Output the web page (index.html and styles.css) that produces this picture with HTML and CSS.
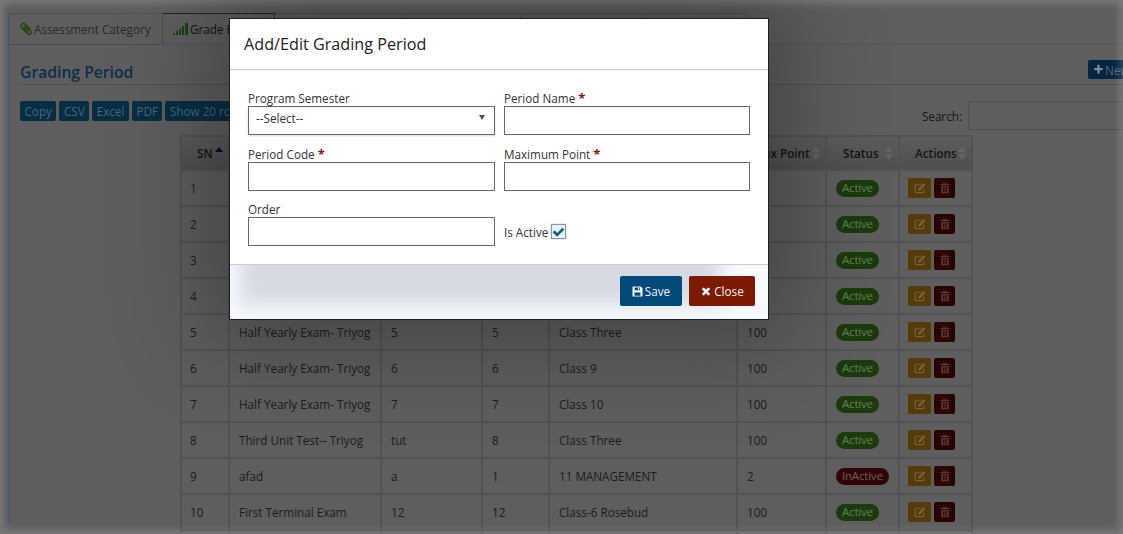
FILE: index.html
```html
<!DOCTYPE html>
<html lang="en">
<head>
<meta charset="utf-8">
<title>Grading Period</title>
<link rel="stylesheet" href="styles.css">
</head>
<body>
<svg class="defs" width="0" height="0" aria-hidden="true">
  <symbol id="i-check" viewBox="0 0 1792 1792"><path d="M1671 566q0 40-28 68l-724 724-136 136q-28 28-68 28t-68-28l-136-136-362-362q-28-28-28-68t28-68l136-136q28-28 68-28t68 28l294 295 656-657q28-28 68-28t68 28l136 136q28 28 28 68z"/></symbol>
  <symbol id="i-times" viewBox="0 0 1792 1792"><path d="M1490 1322q0 40-28 68l-136 136q-28 28-68 28t-68-28l-294-294-294 294q-28 28-68 28t-68-28l-136-136q-28-28-28-68t28-68l294-294-294-294q-28-28-28-68t28-68l136-136q28-28 68-28t68 28l294 294 294-294q28-28 68-28t68 28l136 136q28 28 28 68t-28 68l-294 294 294 294q28 28 28 68z"/></symbol>
  <symbol id="i-plus" viewBox="0 0 1792 1792"><path d="M1600 736v192q0 40-28 68t-68 28h-416v416q0 40-28 68t-68 28h-192q-40 0-68-28t-28-68v-416h-416q-40 0-68-28t-28-68v-192q0-40 28-68t68-28h416v-416q0-40 28-68t68-28h192q40 0 68 28t28 68v416h416q40 0 68 28t28 68z"/></symbol>
  <symbol id="i-clip" viewBox="0 0 1792 1792"><path d="M1596 1385q0 117-79 196t-196 79q-135 0-235-100l-777-776q-113-115-113-271 0-159 110-270t269-111q158 0 273 113l605 606q10 10 10 22 0 16-30.500 46.500t-46.500 30.500q-13 0-23-10l-606-607q-79-77-181-77-106 0-179 75t-73 181q0 105 76 181l776 777q63 63 145 63 64 0 106-42t42-106q0-82-63-145l-581-581q-26-24-60-24-29 0-48 19t-19 48q0 32 25 59l410 410q10 10 10 22 0 16-31 47t-47 31q-12 0-22-10l-410-410q-63-61-63-149 0-82 57-139t139-57q88 0 149 63l581 581q100 98 100 235z"/></symbol>
  <symbol id="i-save" viewBox="0 0 12 12"><path fill-rule="evenodd" d="M1 .5h8.500L11.500 2.500V10.500a1 1 0 0 1-1 1h-9a1 1 0 0 1-1-1v-9a1 1 0 0 1 .5-1zM3 1.500v3.200h5.500V1.500zM6.500 2h1.200v2.200H6.500zM2.800 7v3.500h6.400V7z"/></symbol>
  <symbol id="i-edit" viewBox="0 0 14 14"><path d="M2.500 2h7L8.200 3.300H2.800a.6.6 0 0 0-.6.6v7.300c0 .3.300.6.600.6h7.400c.3 0 .6-.3.600-.6V8.200L12.100 7v4.300a2 2 0 0 1-2 1.900H2.700a2 2 0 0 1-1.900-1.900V3.800A2 2 0 0 1 2.500 2z"/><path d="M11.300 1.500l2 2-6 6-2.800.8.800-2.800z"/></symbol>
  <symbol id="i-trash" viewBox="0 0 12 14"><path fill-rule="evenodd" d="M4.200.8h3.600l.8 1.500H11.500v1.200H.5V2.300h2.900zM5 1.700l-.3.600h2.600L7 1.700zM1.500 4.300h9v8a1 1 0 0 1-1 1h-7a1 1 0 0 1-1-1zM3.500 5.500v6.500h1V5.500zM5.500 5.500v6.500h1V5.500zM7.500 5.500v6.500h1V5.500z"/></symbol>
</svg>

<div class="page">
  <ul class="tabs">
    <li class="tab tab-a">
      <svg class="clip"><use href="#i-clip"/></svg>
      <span>Assessment Category</span>
    </li>
    <li class="tab tab-b is-active">
      <svg class="bars" viewBox="0 0 15 12"><path d="M0 10h2v2H0zM3 8h2v4H3zM6 6h2v6H6zM9 3h2v9H9zM12 0h3v12h-3z"/></svg>
      <span>Grade Period</span>
    </li>
    <li class="tab tab-c"></li>
    <li class="tab tab-d"></li>
    <li class="tab tab-e"></li>
    <li class="tab tab-f"></li>
  </ul>

  <section class="pane">
    <header class="heading">
      <h2>Grading Period</h2>
      <button class="new-btn" type="button"><svg class="ico-plus"><use href="#i-plus"/></svg>New</button>
    </header>

    <div class="toolbar">
      <div class="dt-buttons">
        <span class="dt-btn">Copy</span>
        <span class="dt-btn">CSV</span>
        <span class="dt-btn">Excel</span>
        <span class="dt-btn">PDF</span>
        <span class="dt-btn">Show 20 rows</span>
      </div>
      <label class="search">Search:<span class="search-box"></span></label>
    </div>

    <table class="grid">
      <colgroup>
        <col class="c1"><col class="c2"><col class="c3"><col class="c4"><col class="c5"><col class="c6"><col class="c7"><col class="c8">
      </colgroup>
      <thead>
        <tr>
          <th class="th-sn">SN<i class="sort-up"></i></th>
          <th></th>
          <th></th>
          <th></th>
          <th></th>
          <th class="th-max">Max Point<i class="sort"></i></th>
          <th class="th-st">Status<i class="sort"></i></th>
          <th class="th-ac">Actions<i class="sort"></i></th>
        </tr>
      </thead>
      <tbody>
        <tr><td>1</td><td></td><td></td><td></td><td></td><td></td><td><span class="badge on">Active</span></td><td><span class="act"><span class="a-edit"><svg><use href="#i-edit"/></svg></span><span class="a-del"><svg><use href="#i-trash"/></svg></span></span></td></tr>
        <tr><td>2</td><td></td><td></td><td></td><td></td><td></td><td><span class="badge on">Active</span></td><td><span class="act"><span class="a-edit"><svg><use href="#i-edit"/></svg></span><span class="a-del"><svg><use href="#i-trash"/></svg></span></span></td></tr>
        <tr><td>3</td><td></td><td></td><td></td><td></td><td></td><td><span class="badge on">Active</span></td><td><span class="act"><span class="a-edit"><svg><use href="#i-edit"/></svg></span><span class="a-del"><svg><use href="#i-trash"/></svg></span></span></td></tr>
        <tr><td>4</td><td></td><td></td><td></td><td></td><td></td><td><span class="badge on">Active</span></td><td><span class="act"><span class="a-edit"><svg><use href="#i-edit"/></svg></span><span class="a-del"><svg><use href="#i-trash"/></svg></span></span></td></tr>
        <tr><td>5</td><td>Half Yearly Exam- Triyog</td><td>5</td><td>5</td><td>Class Three</td><td>100</td><td><span class="badge on">Active</span></td><td><span class="act"><span class="a-edit"><svg><use href="#i-edit"/></svg></span><span class="a-del"><svg><use href="#i-trash"/></svg></span></span></td></tr>
        <tr><td>6</td><td>Half Yearly Exam- Triyog</td><td>6</td><td>6</td><td>Class 9</td><td>100</td><td><span class="badge on">Active</span></td><td><span class="act"><span class="a-edit"><svg><use href="#i-edit"/></svg></span><span class="a-del"><svg><use href="#i-trash"/></svg></span></span></td></tr>
        <tr><td>7</td><td>Half Yearly Exam- Triyog</td><td>7</td><td>7</td><td>Class 10</td><td>100</td><td><span class="badge on">Active</span></td><td><span class="act"><span class="a-edit"><svg><use href="#i-edit"/></svg></span><span class="a-del"><svg><use href="#i-trash"/></svg></span></span></td></tr>
        <tr><td>8</td><td>Third Unit Test-- Triyog</td><td>tut</td><td>8</td><td>Class Three</td><td>100</td><td><span class="badge on">Active</span></td><td><span class="act"><span class="a-edit"><svg><use href="#i-edit"/></svg></span><span class="a-del"><svg><use href="#i-trash"/></svg></span></span></td></tr>
        <tr><td>9</td><td>afad</td><td>a</td><td>1</td><td>11 MANAGEMENT</td><td>2</td><td><span class="badge off">InActive</span></td><td><span class="act"><span class="a-edit"><svg><use href="#i-edit"/></svg></span><span class="a-del"><svg><use href="#i-trash"/></svg></span></span></td></tr>
        <tr><td>10</td><td>First Terminal Exam</td><td>12</td><td>12</td><td>Class-6 Rosebud</td><td>100</td><td><span class="badge on">Active</span></td><td><span class="act"><span class="a-edit"><svg><use href="#i-edit"/></svg></span><span class="a-del"><svg><use href="#i-trash"/></svg></span></span></td></tr>
        <tr><td></td><td></td><td></td><td></td><td></td><td></td><td></td><td></td></tr>
      </tbody>
    </table>
  </section>
</div>

<div class="edge"></div>

<div class="modal" role="dialog">
  <div class="modal-head"><h4>Add/Edit Grading Period</h4></div>
  <form class="modal-body">
    <div class="field">
      <label>Program Semester</label>
      <div class="select">--Select--<i class="caret"></i></div>
    </div>
    <div class="field">
      <label>Period Name <b class="req">*</b></label>
      <div class="input"></div>
    </div>
    <div class="field">
      <label>Period Code <b class="req">*</b></label>
      <div class="input"></div>
    </div>
    <div class="field">
      <label>Maximum Point <b class="req">*</b></label>
      <div class="input"></div>
    </div>
    <div class="field">
      <label>Order</label>
      <div class="input"></div>
    </div>
    <div class="field check-field">
      <span>Is Active</span>
      <span class="check"><svg><use href="#i-check"/></svg></span>
    </div>
  </form>
  <div class="modal-foot">
    <button class="btn save" type="button"><svg><use href="#i-save"/></svg>Save</button>
    <button class="btn close" type="button"><svg><use href="#i-times"/></svg>Close</button>
  </div>
</div>
</body>
</html>
```

FILE: styles.css
```css
* { box-sizing: border-box; }
html, body { margin: 0; height: 534px; overflow: hidden; }
body {
  background: #5e5e5e;
  font-family: "Open Sans", "Noto Sans", sans-serif;
  font-size: 11.7px;
  color: #1c1c1c;
  position: relative;
}
.defs { position: absolute; }

.page { padding: 13px 0 0 8px; width: 1123px; height: 534px; overflow: hidden; }

/* tabs */
.tabs { list-style: none; margin: 0; padding: 0; display: flex; height: 32px; width: 1200px; border-bottom: 1px solid #435870; }
.tab { height: 32px; border: 1px solid #40505f; border-left-width: 0; display: flex; align-items: center; gap: 1px; color: #2a2a2a; white-space: nowrap; }
.tab-a { width: 155px; border-left-width: 1px; padding-left: 10px; border-top-color: #4a5560; border-bottom-color: #40505f; }
.tab-b { width: 112px; padding-left: 10px; color: #111; border-top-color: #1c242c; border-bottom-color: transparent; border-right-color: #26313b; }
.tab-c { width: 128px; }
.tab-d { width: 118px; }
.tab-e { width: 122px; }
.tab-f { width: 105px; }
.clip { width: 14px; height: 14px; flex: none; fill: #1a4410; stroke: #1a4410; stroke-width: 70; }
.bars { width: 15px; height: 12px; fill: #1a4410; flex: none; margin-right: 1px; }

/* pane */
.pane { width: 1140px; height: 480px; border-left: 1px solid #435870; padding: 0 0 0 11px; }
.heading { display: flex; justify-content: space-between; align-items: flex-end; height: 40px; border-bottom: 1px solid #4f4f4f; }
.heading h2 { margin: 0; font-size: 15.7px; line-height: 24px; font-weight: 600; color: #0c2e4c; }
.new-btn { width: 60px; height: 19px; align-self: flex-start; margin: 15px 0 0; border: 0; border-radius: 2px; padding: 0 0 0 5px; background: #052540; color: #506a7c; font: 11.7px "Open Sans", sans-serif; display: flex; align-items: center; text-align: left; }
.ico-plus { width: 11px; height: 11px; fill: #7a8d9c; margin-right: 1px; }

.toolbar { display: flex; justify-content: space-between; align-items: flex-start; margin-top: 16px; height: 34px; }
.dt-buttons { display: flex; gap: 3px; }
.dt-btn { height: 20px; line-height: 20px; padding: 0 4.500px; background: #072e44; color: #47697b; border-radius: 2px; white-space: nowrap; }
.search { display: flex; align-items: center; gap: 6px; color: #161616; }
.search-box { width: 180px; height: 29px; border: 1px solid #505050; display: block; }

/* table */
.grid { margin-left: 160px; width: 793px; border-collapse: separate; border-spacing: 0; table-layout: fixed; }
.c1 { width: 50px; } .c2 { width: 152px; } .c3 { width: 101px; } .c4 { width: 67px; }
.c5 { width: 188px; } .c6 { width: 89px; } .c7 { width: 73px; } .c8 { width: 73px; }
.grid th, .grid td { border-right: 2px solid #525252; border-bottom: 2px solid #525252; white-space: nowrap; overflow: hidden; }
.grid th:first-child, .grid td:first-child { border-left: 2px solid #525252; }
.grid th { height: 36px; font-weight: 600; background: linear-gradient(#5c5c5c, #4f4f4f); border-top: 2px solid #525252; text-align: left; padding: 0 0 0 15px; color: #141414; position: relative; }
.grid td { height: 36px; padding: 0 0 0 9px; color: #1c1c1c; }
.grid td:first-child { padding-left: 8px; }
.th-max { text-align: right !important; padding-right: 17px !important; }
.th-st { padding-left: 16px !important; }
.sort, .sort-up { position: absolute; right: 5px; top: 9px; display: block; width: 8px; height: 14px; }
.sort::before, .sort::after, .sort-up::before { content: ""; position: absolute; left: 0; border-left: 4px solid transparent; border-right: 4px solid transparent; }
.sort::before { top: 0; border-bottom: 6px solid #636363; }
.sort::after { bottom: 0; border-top: 6px solid #636363; }
.sort-up::before { top: 1px; border-bottom: 5px solid #0a0a34; }

.badge { display: inline-block; height: 17px; line-height: 16px; padding: 0 6px; border-radius: 9px; font-size: 11.5px; letter-spacing: -.2px; vertical-align: middle; }
.on { background: #1c3a0e; color: #64805a; }
.off { background: #2e0606; color: #7a5a5a; }
.act { display: flex; gap: 3px; }
.a-edit, .a-del { height: 20px; display: flex; align-items: center; justify-content: center; border-radius: 2px; }
.a-edit { width: 23px; background: #553a0a; fill: #7a5f38; }
.a-del { width: 21px; background: #2a0202; fill: #5e3a3a; }
.a-edit svg { width: 12px; height: 12px; }
.a-del svg { width: 10px; height: 12px; }
.grid td:nth-child(8) { padding-left: 8px; }

/* edge haze */
.edge { position: absolute; inset: 0; box-shadow: inset 0 0 7px 4px rgba(255,255,255,.17); pointer-events: none; }

/* modal */
.modal {
  position: absolute; left: 229px; top: 18px; width: 540px; height: 302px;
  background: #fff; border: 1px solid #1e1e1e; color: #333;
  box-shadow: 0 0 90px 20px rgba(0,0,0,.3);
  display: flex; flex-direction: column;
}
.modal-head { height: 51px; flex: none; border-bottom: 1px solid #c6c6c6; padding: 0 14px; display: flex; align-items: center; }
.modal-head h4 { margin: 0; font-size: 16.200px; font-weight: 400; line-height: 48px; color: #222; }
.modal-body { flex: 1; display: grid; grid-template-columns: 247px 246px; grid-template-rows: 56px 55px 56px; column-gap: 9px; padding: 20px 18px 0; align-content: start; }
.field { display: flex; flex-direction: column; }
.field label { height: 16px; line-height: 16px; color: #333; white-space: nowrap; }
.req { color: #8f0f0f; font-size: 13px; font-weight: 700; line-height: 0; }
.input, .select { height: 29px; border: 1px solid #666; background: #fff; display: block; flex: none; }
.select { position: relative; padding-left: 7px; line-height: 23px; color: #333; box-shadow: 0 1px 2px rgba(0,0,0,.15); }
.caret { position: absolute; right: 9px; top: 8px; border-left: 3.500px solid transparent; border-right: 3.500px solid transparent; border-top: 5px solid #555; }
.check-field { flex-direction: row; align-items: center; gap: 3px; padding-top: 5px; }
.check { width: 15px; height: 15px; border: 1px solid #7f98a8; background: #e8f0f4; display: flex; align-items: center; justify-content: center; box-shadow: 0 0 1px rgba(0,0,0,.4); }
.check svg { width: 14px; height: 14px; fill: #0c6288; }

.modal-foot { height: 55px; flex: none; position: relative; overflow: hidden; background: #f6faff; border-top: 1px solid #c8ced6; display: flex; justify-content: flex-end; align-items: flex-start; gap: 7px; padding: 11px 13px 0 0; }
.modal-foot::before { content: ""; position: absolute; left: 10px; top: -30px; width: 480px; height: 70px; background: #d6dae3; filter: blur(9px); }
.btn { position: relative; height: 30px; border: 0; border-radius: 2px; color: #f2f2f2; font: 11.7px "Open Sans", sans-serif; display: flex; align-items: center; justify-content: center; gap: 2px; padding: 0; }
.btn svg { width: 11px; height: 11px; fill: #f2f2f2; }
.close svg { width: 12px; height: 12px; }
.save { width: 62px; background: #024a7c; }
.close { width: 66px; background: #7c1a04; }
```
